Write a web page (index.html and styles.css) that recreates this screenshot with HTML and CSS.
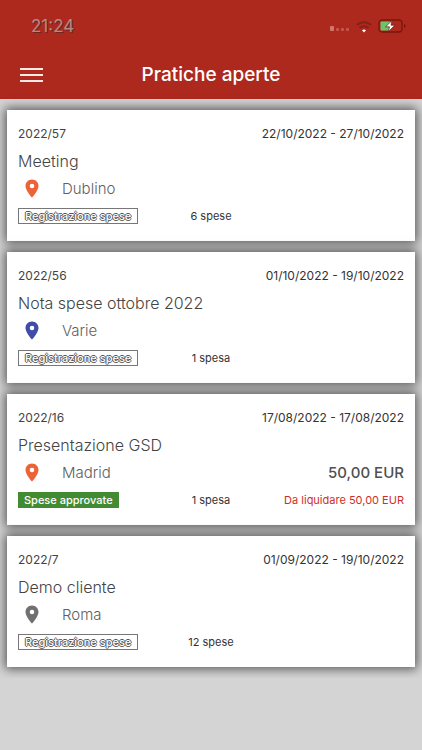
FILE: index.html
```html
<!DOCTYPE html>
<html lang="it">
<head>
	<meta charset="utf-8">
	<meta name="viewport" content="width=device-width, initial-scale=1">
	<title>Pratiche aperte</title>
	<link rel="stylesheet" href="styles.css">
</head>
<body>
	<svg class="defs" width="0" height="0" aria-hidden="true">
		<symbol id="pin" viewBox="0 0 14 20">
			<path fill-rule="evenodd" d="M7 0.500C3.300 0.500 0.500 3.400 0.500 7c0 4.800 6.500 11.500 6.500 11.500S13.500 11.800 13.500 7c0-3.600-2.800-6.500-6.500-6.500zm0 8.800a2.300 2.300 0 1 1 0-4.600 2.300 2.300 0 0 1 0 4.600z"/>
		</symbol>
	</svg>

	<header class="header">
		<div class="status-bar">
			<span class="time">21:24</span>
			<div class="status-icons">
				<svg width="20" height="12" viewBox="0 0 20 12" fill="#c4574c">
					<rect x="0" y="6" width="4" height="5" rx="1" fill="#d2776e"/>
					<rect x="6" y="8" width="3" height="3" rx="1"/>
					<rect x="11" y="8" width="3" height="3" rx="1"/>
					<rect x="16" y="8" width="3" height="3" rx="1"/>
				</svg>
				<svg width="16" height="13" viewBox="0 0 16 13" fill="none" stroke="#8a1f15" stroke-width="2">
					<path d="M1 5a10 10 0 0 1 14 0"/>
					<path d="M3.500 8a6.500 6.500 0 0 1 9 0"/>
					<path d="M8 12.500L6 10.300a3 3 0 0 1 4 0z" fill="#fff" stroke="none"/>
				</svg>
				<svg width="28" height="14" viewBox="0 0 28 14">
					<rect x="1" y="1" width="23" height="12" rx="3" fill="none" stroke="#7a160e" stroke-width="1.300"/>
					<rect x="2.500" y="2.500" width="10" height="9" rx="1" fill="#6cc467"/>
					<path d="M26 5c2 .6 2 3.400 0 4z" fill="#7a160e"/>
					<path d="M14 1.500L7.500 7.800h4L10.500 12.500 17 6.200h-4z" fill="#fff" stroke="#5c1812" stroke-width=".7"/>
				</svg>
			</div>
		</div>
		<div class="toolbar">
			<button class="menu-button" type="button" aria-label="Menu">
				<span class="menu-line"></span>
				<span class="menu-line"></span>
				<span class="menu-line"></span>
			</button>
			<h1 class="title">Pratiche aperte</h1>
		</div>
	</header>

	<main class="list">
		<article class="card">
			<div class="row">
				<span class="code">2022/57</span>
				<span class="dates">22/10/2022 - 27/10/2022</span>
			</div>
			<h2 class="name">Meeting</h2>
			<div class="row place-row">
				<svg class="pin pin-orange"><use href="#pin"/></svg>
				<span class="place">Dublino</span>
			</div>
			<div class="footer">
				<span class="badge badge-open">Registrazione spese</span>
				<span class="count">6 spese</span>
			</div>
		</article>

		<article class="card">
			<div class="row">
				<span class="code">2022/56</span>
				<span class="dates">01/10/2022 - 19/10/2022</span>
			</div>
			<h2 class="name">Nota spese ottobre 2022</h2>
			<div class="row place-row">
				<svg class="pin pin-blue"><use href="#pin"/></svg>
				<span class="place">Varie</span>
			</div>
			<div class="footer">
				<span class="badge badge-open">Registrazione spese</span>
				<span class="count">1 spesa</span>
			</div>
		</article>

		<article class="card">
			<div class="row">
				<span class="code">2022/16</span>
				<span class="dates">17/08/2022 - 17/08/2022</span>
			</div>
			<h2 class="name">Presentazione GSD</h2>
			<div class="row place-row">
				<svg class="pin pin-orange"><use href="#pin"/></svg>
				<span class="place">Madrid</span>
				<span class="amount">50,00 EUR</span>
			</div>
			<div class="footer">
				<span class="badge badge-approved">Spese approvate</span>
				<span class="count">1 spesa</span>
				<span class="due">Da liquidare 50,00 EUR</span>
			</div>
		</article>

		<article class="card">
			<div class="row">
				<span class="code">2022/7</span>
				<span class="dates">01/09/2022 - 19/10/2022</span>
			</div>
			<h2 class="name">Demo cliente</h2>
			<div class="row place-row">
				<svg class="pin pin-gray"><use href="#pin"/></svg>
				<span class="place">Roma</span>
			</div>
			<div class="footer">
				<span class="badge badge-open">Registrazione spese</span>
				<span class="count">12 spese</span>
			</div>
		</article>
	</main>
</body>
</html>
```
FILE: styles.css
```css
* {
	box-sizing: border-box;
}
body {
	margin: 0;
	font-family: Inter, "Liberation Sans", sans-serif;
	color: #444;
	background-color: #d4d4d4;
}
.defs {
	display: block;
}

/* header */
.header {
	background-color: #ae291d;
	color: white;
}
.status-bar {
	display: flex;
	align-items: center;
	justify-content: space-between;
	height: 52px;
	padding: 0 16px 0 31px;
}
.time {
	font-size: 17px;
	line-height: 20px;
	color: #b08a86;
	text-shadow: 1px 1px #6f2620;
}
.status-icons {
	display: flex;
	align-items: center;
	gap: 6px;
}
.toolbar {
	display: grid;
	grid-template-columns: 1fr auto 1fr;
	align-items: center;
	height: 47px;
	padding: 0 20px 2px;
}
.menu-button {
	display: flex;
	flex-direction: column;
	gap: 4px;
	width: 23px;
	padding: 0;
	border: 0;
	background: none;
}
.menu-line {
	width: 100%;
	height: 2px;
	background-color: #fbe9e7;
}
.title {
	margin: 0;
	font-size: 19px;
	font-weight: 500;
	line-height: 24px;
}

/* cards */
.list {
	display: flex;
	flex-direction: column;
	gap: 11px;
	padding: 11px 7px;
}
.card {
	padding: 14px 11px 17px;
	background-color: white;
	box-shadow: 0 0 10px 2px rgba(0, 0, 0, 0.6);
}
.row {
	display: flex;
	align-items: center;
	justify-content: space-between;
	line-height: 20px;
}
.code,
.dates {
	font-size: 12px;
}
.dates {
	color: #333;
}
.name {
	margin: 7px 0 8px;
	font-size: 16px;
	font-weight: 300;
	line-height: 20px;
	color: #444;
}
.place-row {
	justify-content: flex-start;
	padding-left: 7px;
}
.pin {
	width: 14px;
	height: 20px;
}
.pin-orange {
	fill: #ec6337;
}
.pin-blue {
	fill: #3f4da8;
}
.pin-gray {
	fill: #707070;
}
.place {
	margin-left: 23px;
	font-size: 15px;
	font-weight: 300;
	color: #606060;
}
.amount {
	margin-left: auto;
	font-size: 15px;
	font-weight: 500;
	color: #505050;
}
.footer {
	display: grid;
	grid-template-columns: 1fr auto 1fr;
	align-items: center;
	margin-top: 9px;
	line-height: 16px;
	font-size: 11px;
}
.badge {
	justify-self: start;
	padding: 0 6px;
	font-weight: 500;
	color: white;
}
.badge-open {
	border: 1px solid #777;
	line-height: 14px;
	text-shadow: -1px 0 #555, 1px 0 #666, 0 -1px #555, 0 1px #666;
}
.badge-approved {
	background-color: #438b32;
}
.count {
	color: #333;
}
.due {
	justify-self: end;
	color: #d02f28;
}
```
